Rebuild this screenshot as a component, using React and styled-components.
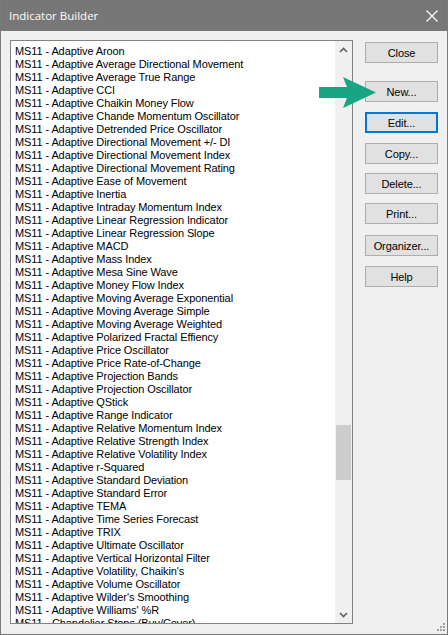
import React from "react";
import styled, { createGlobalStyle } from "styled-components";

const Global = createGlobalStyle`
  html, body { margin: 0; padding: 0; background: #f0f0f0; }
  body { font-family: "Liberation Sans", Arial, sans-serif; }
`;

const Window = styled.div`
  position: relative;
  width: 448px;
  height: 635px;
  box-sizing: border-box;
  border: 1px solid #7a7a7a;
  border-top: none;
  background: #f0f0f0;
  display: flex;
  flex-direction: column;
  overflow: hidden;
`;

const TitleBar = styled.div`
  height: 31px;
  margin: 0 -1px;
  background: #777777;
  display: flex;
  align-items: center;
  justify-content: space-between;
  padding: 0 9px 0 9px;
  box-sizing: border-box;
  flex-shrink: 0;
`;

const Title = styled.span`
  color: #ffffff;
  font-family: "Open Sans", "Liberation Sans", sans-serif;
  font-size: 11.5px;
  padding-bottom: 1px;
`;

const CloseX = styled.svg`
  width: 12px;
  height: 12px;
  margin-right: 1px;
`;

const Body = styled.div`
  flex: 1;
  display: flex;
  padding: 9px 9px 0 9px;
  gap: 12px;
`;

const ListBox = styled.div`
  width: 343px;
  height: 584px;
  box-sizing: border-box;
  border: 1px solid #828282;
  background: #ffffff;
  display: flex;
  overflow: hidden;
  flex-shrink: 0;
`;

const Items = styled.ul`
  list-style: none;
  margin: 0;
  padding: 4px 0 0 4px;
  flex: 1;
  overflow: hidden;
`;

const Item = styled.li`
  height: 13px;
  line-height: 13px;
  font-size: 11px;
  letter-spacing: -0.1px;
  color: #000;
  white-space: nowrap;
`;

const ScrollBar = styled.div`
  width: 17px;
  background: #f0f0f0;
  display: flex;
  flex-direction: column;
  align-items: center;
`;

const ArrowBox = styled.div`
  height: 17px;
  width: 17px;
  display: flex;
  align-items: center;
  justify-content: center;
`;

const Track = styled.div`
  flex: 1;
  width: 100%;
  position: relative;
`;

const Thumb = styled.div`
  position: absolute;
  left: 1px;
  right: 1px;
  top: 367px;
  height: 55px;
  background: #cdcdcd;
`;

const Buttons = styled.div`
  display: flex;
  flex-direction: column;
  padding-top: 2px;
  width: 73px;
`;

const Button = styled.button`
  width: 73px;
  height: 21px;
  box-sizing: border-box;
  background: #e1e1e1;
  border: ${(p) => (p.$focused ? "2px solid #0078d7" : "1px solid #adadad")};
  font-family: "Liberation Sans", Arial, sans-serif;
  font-size: 11px;
  letter-spacing: -0.1px;
  color: #000;
  padding: 0;
  margin-top: ${(p) => p.$gap}px;
  cursor: default;
`;

const Arrow = styled.svg`
  position: absolute;
  left: 316px;
  top: 75px;
  width: 62px;
  height: 36px;
`;

const Grip = styled.svg`
  position: absolute;
  right: 2px;
  bottom: 2px;
  width: 10px;
  height: 10px;
`;

const names = [
  "Aroon",
  "Average Directional Movement",
  "Average True Range",
  "CCI",
  "Chaikin Money Flow",
  "Chande Momentum Oscillator",
  "Detrended Price Oscillator",
  "Directional Movement +/- DI",
  "Directional Movement Index",
  "Directional Movement Rating",
  "Ease of Movement",
  "Inertia",
  "Intraday Momentum Index",
  "Linear Regression Indicator",
  "Linear Regression Slope",
  "MACD",
  "Mass Index",
  "Mesa Sine Wave",
  "Money Flow Index",
  "Moving Average Exponential",
  "Moving Average Simple",
  "Moving Average Weighted",
  "Polarized Fractal Effiency",
  "Price Oscillator",
  "Price Rate-of-Change",
  "Projection Bands",
  "Projection Oscillator",
  "QStick",
  "Range Indicator",
  "Relative Momentum Index",
  "Relative Strength Index",
  "Relative Volatility Index",
  "r-Squared",
  "Standard Deviation",
  "Standard Error",
  "TEMA",
  "Time Series Forecast",
  "TRIX",
  "Ultimate Oscillator",
  "Vertical Horizontal Filter",
  "Volatility, Chaikin's",
  "Volume Oscillator",
  "Wilder's Smoothing",
  "Williams' %R",
];

const items = [
  ...names.map((n) => `MS11 - Adaptive ${n}`),
  "MS11 - Chandelier Stops (Buy/Cover)",
];

const buttons = [
  { label: "Close", gap: 0 },
  { label: "New...", gap: 18 },
  { label: "Edit...", gap: 10, focused: true },
  { label: "Copy...", gap: 10 },
  { label: "Delete...", gap: 9 },
  { label: "Print...", gap: 9 },
  { label: "Organizer...", gap: 11 },
  { label: "Help", gap: 10 },
];

export default function App() {
  return (
    <>
      <Global />
      <Window>
        <TitleBar>
          <Title>Indicator Builder</Title>
          <CloseX viewBox="0 0 12 12">
            <path d="M0.5 0.5 L11.5 11.5 M11.5 0.5 L0.5 11.5" stroke="#ffffff" strokeWidth="1.1" />
          </CloseX>
        </TitleBar>
        <Body>
          <ListBox>
            <Items>
              {items.map((t) => (
                <Item key={t}>{t}</Item>
              ))}
            </Items>
            <ScrollBar>
              <ArrowBox>
                <svg width="9" height="6" viewBox="0 0 9 6">
                  <path d="M1 5 L4.5 1.5 L8 5" fill="none" stroke="#606060" strokeWidth="1.6" />
                </svg>
              </ArrowBox>
              <Track>
                <Thumb />
              </Track>
              <ArrowBox>
                <svg width="9" height="6" viewBox="0 0 9 6">
                  <path d="M1 1 L4.5 4.5 L8 1" fill="none" stroke="#606060" strokeWidth="1.6" />
                </svg>
              </ArrowBox>
            </ScrollBar>
          </ListBox>
          <Buttons>
            {buttons.map((b) => (
              <Button key={b.label} $gap={b.gap} $focused={b.focused}>
                {b.label}
              </Button>
            ))}
          </Buttons>
        </Body>
        <Arrow viewBox="0 0 62 36">
          <path d="M2 12 L30 12 L26 2 L59 17.5 L26 33 L30 23 L2 23 Z" fill="#17a683" />
        </Arrow>
        <Grip viewBox="0 0 10 10">
          {[[8, 0], [8, 3], [5, 3], [8, 6], [5, 6], [2, 6]].map(([x, y]) => (
            <rect key={`${x}-${y}`} x={x} y={y + 1} width="2" height="2" fill="#a0a0a0" />
          ))}
        </Grip>
      </Window>
    </>
  );
}
